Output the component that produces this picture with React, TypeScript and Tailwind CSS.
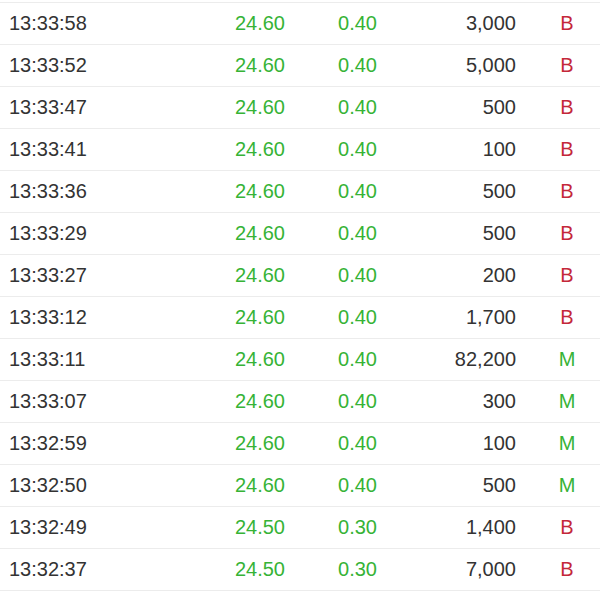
import React from "react";

type Row = { t: string; p: string; c: string; v: string; f: "B" | "M" };

const rows: Row[] = [
  { t: "13:33:58", p: "24.60", c: "0.40", v: "3,000", f: "B" },
  { t: "13:33:52", p: "24.60", c: "0.40", v: "5,000", f: "B" },
  { t: "13:33:47", p: "24.60", c: "0.40", v: "500", f: "B" },
  { t: "13:33:41", p: "24.60", c: "0.40", v: "100", f: "B" },
  { t: "13:33:36", p: "24.60", c: "0.40", v: "500", f: "B" },
  { t: "13:33:29", p: "24.60", c: "0.40", v: "500", f: "B" },
  { t: "13:33:27", p: "24.60", c: "0.40", v: "200", f: "B" },
  { t: "13:33:12", p: "24.60", c: "0.40", v: "1,700", f: "B" },
  { t: "13:33:11", p: "24.60", c: "0.40", v: "82,200", f: "M" },
  { t: "13:33:07", p: "24.60", c: "0.40", v: "300", f: "M" },
  { t: "13:32:59", p: "24.60", c: "0.40", v: "100", f: "M" },
  { t: "13:32:50", p: "24.60", c: "0.40", v: "500", f: "M" },
  { t: "13:32:49", p: "24.50", c: "0.30", v: "1,400", f: "B" },
  { t: "13:32:37", p: "24.50", c: "0.30", v: "7,000", f: "B" },
];

export default function App() {
  return (
    <div
      className="w-[600px] h-[600px] bg-white overflow-hidden pt-[2px] text-[20px]"
      style={{ fontFamily: '"Liberation Sans", Arial, sans-serif' }}
    >
      <div className="border-b border-[#ececec]">
        {rows.map((r, i) => (
          <div
            key={i}
            className="flex items-center h-[42px] border-t border-[#ececec] pb-[1px] leading-[23px]"
          >
            <div className="w-[200px] pl-[9px] text-[#333333]">{r.t}</div>
            <div className="w-[85px] text-right text-[#36b336]">{r.p}</div>
            <div className="w-[92px] text-right text-[#36b336]">{r.c}</div>
            <div className="w-[139px] text-right text-[#333333]">{r.v}</div>
            <div
              className={
                "w-[32px] ml-[35px] text-center " +
                (r.f === "B" ? "text-[#c4283a]" : "text-[#36b336]")
              }
            >
              {r.f}
            </div>
          </div>
        ))}
      </div>
    </div>
  );
}
